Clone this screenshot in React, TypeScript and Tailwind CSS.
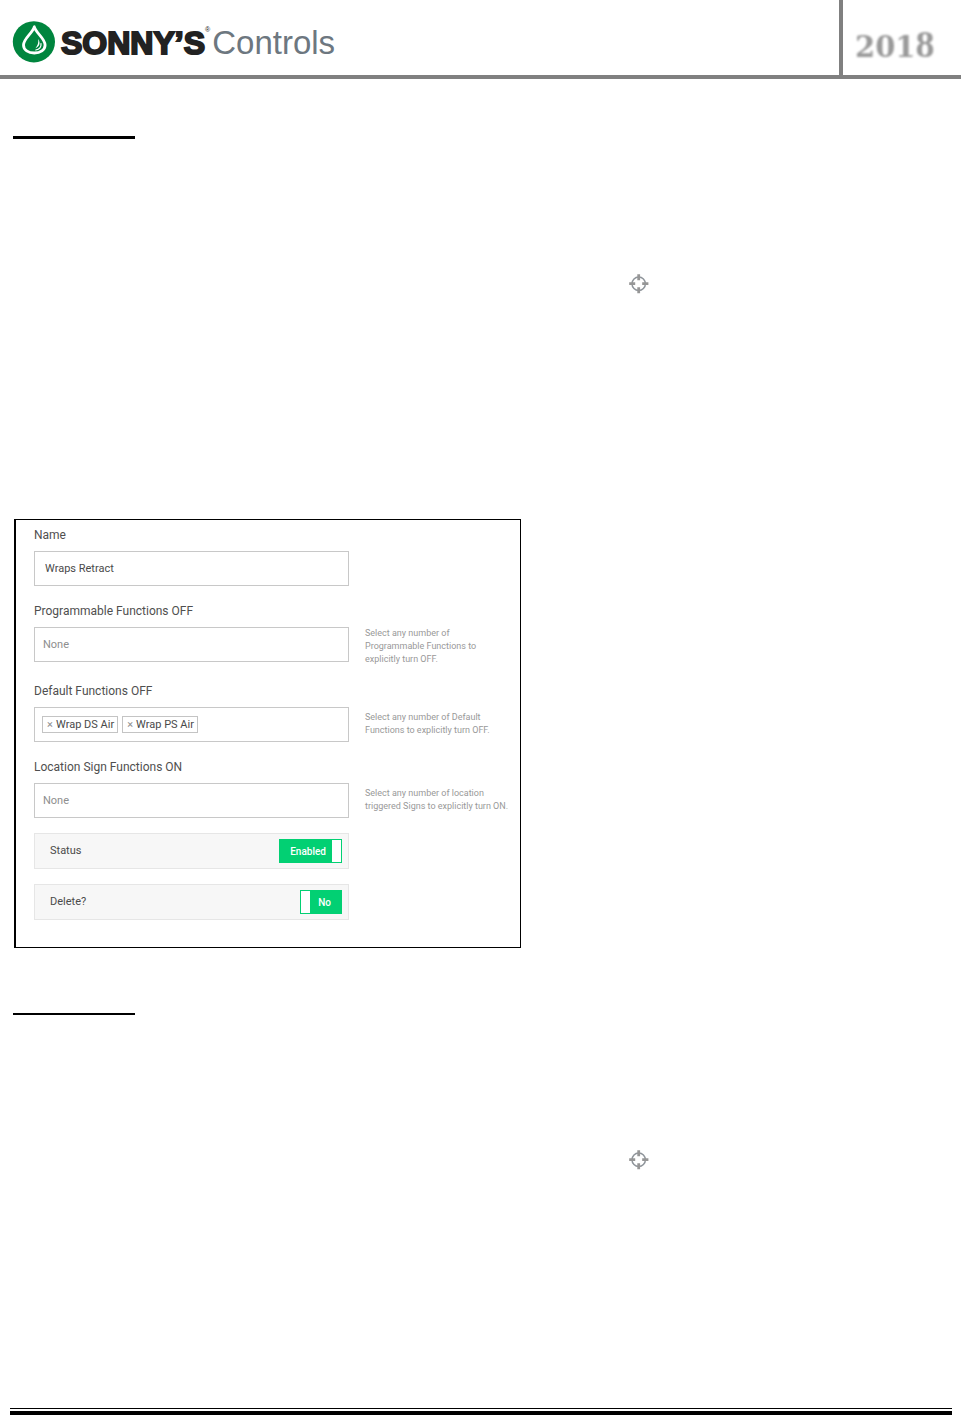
import React, { useState } from "react";

interface FieldProps {
  id: string;
  label: string;
  help?: string;
  helpClass?: string;
  children: React.ReactNode;
}

const inputClass =
  "h-[35px] w-full border border-[#c8c8c8] bg-white font-[Roboto,sans-serif] text-[11px] text-[#4a4a4a] placeholder:text-[#8e8e8e] outline-none";

const Field: React.FC<FieldProps> = ({
  id,
  label,
  help,
  helpClass = "pt-1",
  children,
}) => (
  <div>
    <label htmlFor={id} className="block mb-1.5 text-[12px] leading-5 text-[#4f4f4f]">
      {label}
    </label>
    <div className="flex items-start gap-4">
      <div className="w-[315px] shrink-0">{children}</div>
      {help && (
        <p className={`w-[145px] text-[9px] leading-[13px] text-[#999] ${helpClass}`}>
          {help}
        </p>
      )}
    </div>
  </div>
);

interface ToggleProps {
  id: string;
  label: string;
  onText: string;
  offText: string;
  checked: boolean;
  onChange: (value: boolean) => void;
}

const Toggle: React.FC<ToggleProps> = ({
  id,
  label,
  onText,
  offText,
  checked,
  onChange,
}) => (
  <label
    htmlFor={id}
    className="flex h-9 w-[315px] items-center justify-between border border-[#e6e6e6] bg-[#f7f7f7] pl-[15px] pr-[6px] text-[11px] text-[#4a4a4a]"
  >
    {label}
    <input
      id={id}
      type="checkbox"
      className="sr-only"
      checked={checked}
      onChange={(e) => onChange(e.target.checked)}
    />
    <span
      className={`flex h-6 border border-[#02d073] bg-[#02d073] text-[10px] font-medium leading-6 text-white ${
        checked ? "" : "flex-row-reverse"
      }`}
    >
      <span className={checked ? "pl-2.5 pr-1.5" : "pl-2 pr-2.5"}>
        {checked ? onText : offText}
      </span>
      <span className="h-full w-[9px] bg-white" />
    </span>
  </label>
);

const Tag: React.FC<{ name: string; onRemove: () => void }> = ({ name, onRemove }) => (
  <span className="flex h-[17px] items-center gap-0.5 border border-[#c4c4c4] px-[3px] text-[11px] leading-4 text-[#4a4a4a]">
    <button
      type="button"
      aria-label={`Remove ${name}`}
      className="w-2 text-[#8e8e8e]"
      onClick={onRemove}
    >
      ×
    </button>
    {name}
  </span>
);

const DropLogo = () => (
  <svg viewBox="0 0 43 42" className="h-[42px] w-[43px] shrink-0" aria-hidden="true">
    <ellipse cx="21.9" cy="20.8" rx="21.1" ry="20.6" fill="#00853e" />
    <path
      d="M22.300 5.800 C20.300 12.500 11.500 17.500 11.500 24 C11.500 29 16.300 32 22.300 32 C28.300 32 33.100 29 33.100 24 C33.100 17.500 24.300 12.500 22.300 5.800 Z"
      fill="none"
      stroke="#fff"
      strokeWidth="2.800"
      strokeLinejoin="round"
    />
    <path
      d="M29 22.500 C29.400 26 27.500 28.600 23.800 29"
      fill="none"
      stroke="#fff"
      strokeWidth="1.200"
      strokeLinecap="round"
    />
    <path d="M26.300 18 C28.600 22 27.800 25.500 23.500 27.200 C25.800 24.500 26.600 21.500 26.300 18 Z" fill="#fff" />
  </svg>
);

const TargetIcon = () => (
  <svg viewBox="0 0 20 20" className="ml-[629px] size-5" aria-hidden="true">
    <circle cx="9.700" cy="9.700" r="6.700" fill="none" stroke="#8f959b" strokeWidth="1.500" />
    <path
      d="M9.700 .3v6M9.700 13.200v6M.2 9.700h6M13.200 9.700h6.200"
      stroke="#969696"
      strokeWidth="2.800"
      fill="none"
    />
  </svg>
);

const App = () => {
  const [name, setName] = useState("Wraps Retract");
  const [tags, setTags] = useState(["Wrap DS Air", "Wrap PS Air"]);
  const [enabled, setEnabled] = useState(true);
  const [remove, setRemove] = useState(false);

  return (
    <div className="flex min-h-screen flex-col bg-white font-[Roboto,sans-serif]">
      <header className="flex h-[79px] justify-between border-b-4 border-[#808080]">
        <div className="flex items-center pl-3 pt-2 font-['Liberation_Sans',sans-serif] text-[33px] leading-10">
          <DropLogo />
          <span className="ml-1.5 mt-0.5 text-[32px] font-bold text-[#222] [-webkit-text-stroke:2px_#222]">
            SONNY’S
          </span>
          <span className="-mt-6 text-[7px] leading-none text-[#222]">®</span>
          <span className="ml-0.5 mt-0.5 text-[#6d7780]">Controls</span>
        </div>
        <div className="w-[122px] border-l-4 border-[#808080] pl-3 pt-6">
          <p className="flex items-baseline font-['DejaVu_Serif',serif] text-[29px] font-bold leading-10 text-[#999] blur-[1px]">
            201
            <span className="font-['Liberation_Serif',serif] text-[38px]">8</span>
          </p>
        </div>
      </header>

      <main>
        <section>
          <hr className="ml-[13px] mt-[57px] w-[122px] border-t-[3px] border-black" />
          <div className="mt-[135px]">
            <TargetIcon />
          </div>

          <form className="ml-3.5 mt-[225px] flex w-full max-w-[507px] flex-col gap-[15px] border border-l-2 border-black pb-[27px] pl-[18px] pt-[5px]">
            <Field id="name" label="Name">
              <input
                id="name"
                className={`${inputClass} px-2.5`}
                value={name}
                onChange={(e) => setName(e.target.value)}
              />
            </Field>
            <Field
              id="programmable"
              label="Programmable Functions OFF"
              help="Select any number of Programmable Functions to explicitly turn OFF."
              helpClass="pt-0"
            >
              <input id="programmable" className={`${inputClass} px-2`} placeholder="None" />
            </Field>
            <Field
              id="defaults"
              label="Default Functions OFF"
              help="Select any number of Default Functions to explicitly turn OFF."
            >
              <div className="flex h-[35px] items-center gap-1 border border-[#c8c8c8] px-[7px]">
                {tags.map((tag) => (
                  <Tag
                    key={tag}
                    name={tag}
                    onRemove={() => setTags(tags.filter((t) => t !== tag))}
                  />
                ))}
                <input id="defaults" className="min-w-0 flex-1 text-[11px] outline-none" />
              </div>
            </Field>
            <Field
              id="signs"
              label="Location Sign Functions ON"
              help="Select any number of location triggered Signs to explicitly turn ON."
            >
              <input id="signs" className={`${inputClass} px-2`} placeholder="None" />
            </Field>
            <Toggle
              id="status"
              label="Status"
              onText="Enabled"
              offText="Disabled"
              checked={enabled}
              onChange={setEnabled}
            />
            <Toggle
              id="delete"
              label="Delete?"
              onText="Yes"
              offText="No"
              checked={remove}
              onChange={setRemove}
            />
          </form>
        </section>

        <section>
          <hr className="ml-[13px] mt-[65px] w-[122px] border-t-2 border-black" />
          <div className="mt-[135px]">
            <TargetIcon />
          </div>
        </section>
      </main>

      <footer className="ml-2.5 mr-[9px] mt-auto h-[7px] border-b-4 border-t border-black" />
    </div>
  );
};

export default App;
